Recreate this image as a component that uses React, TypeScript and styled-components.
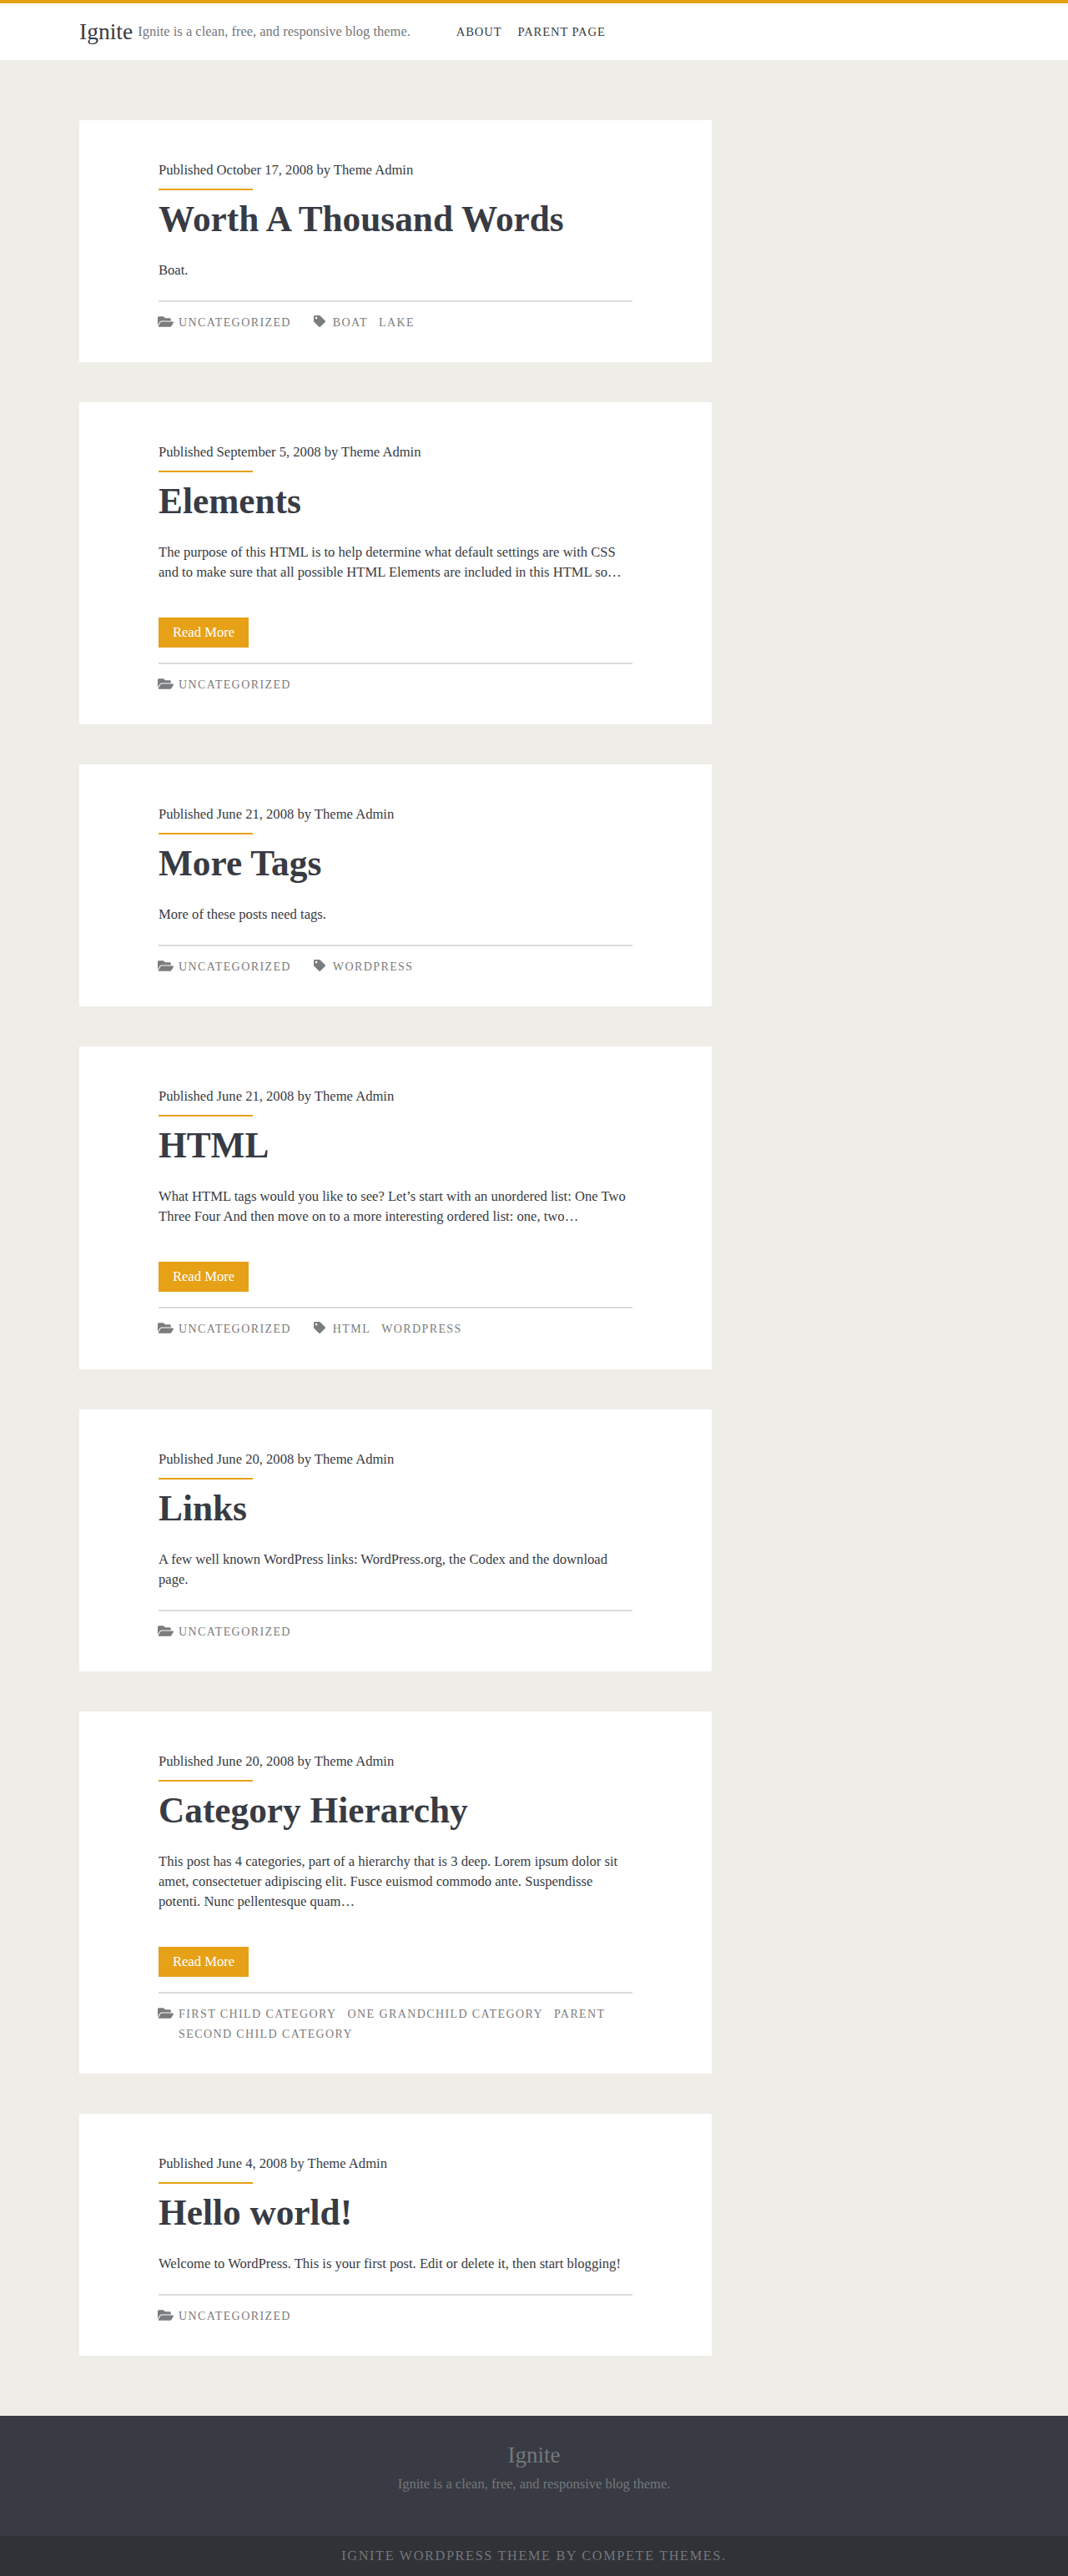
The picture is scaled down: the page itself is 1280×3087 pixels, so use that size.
import React from "react";
import styled, { createGlobalStyle } from "styled-components";
import { FaFolderOpen, FaTag } from "react-icons/fa";

const ORANGE = "#e6a117";
const DARK = "#383b43";

const posts = [
  {
    date: "October 17, 2008",
    title: "Worth A Thousand Words",
    excerpt: "Boat.",
    more: false,
    categories: ["Uncategorized"],
    tags: ["Boat", "Lake"],
  },
  {
    date: "September 5, 2008",
    title: "Elements",
    excerpt:
      "The purpose of this HTML is to help determine what default settings are with CSS and to make sure that all possible HTML Elements are included in this HTML so…",
    more: true,
    categories: ["Uncategorized"],
    tags: [],
  },
  {
    date: "June 21, 2008",
    title: "More Tags",
    excerpt: "More of these posts need tags.",
    more: false,
    categories: ["Uncategorized"],
    tags: ["WordPress"],
  },
  {
    date: "June 21, 2008",
    title: "HTML",
    excerpt:
      "What HTML tags would you like to see? Let’s start with an unordered list: One Two Three Four And then move on to a more interesting ordered list: one, two…",
    more: true,
    categories: ["Uncategorized"],
    tags: ["HTML", "WordPress"],
  },
  {
    date: "June 20, 2008",
    title: "Links",
    excerpt:
      "A few well known WordPress links: WordPress.org, the Codex and the download page.",
    more: false,
    categories: ["Uncategorized"],
    tags: [],
  },
  {
    date: "June 20, 2008",
    title: "Category Hierarchy",
    excerpt:
      "This post has 4 categories, part of a hierarchy that is 3 deep. Lorem ipsum dolor sit amet, consectetuer adipiscing elit. Fusce euismod commodo ante. Suspendisse potenti. Nunc pellentesque quam…",
    more: true,
    categories: [
      "First Child Category",
      "One Grandchild Category",
      "Parent",
      "Second Child Category",
    ],
    tags: [],
  },
  {
    date: "June 4, 2008",
    title: "Hello world!",
    excerpt:
      "Welcome to WordPress. This is your first post. Edit or delete it, then start blogging!",
    more: false,
    categories: ["Uncategorized"],
    tags: [],
  },
];

const GlobalStyle = createGlobalStyle`
  body {
    margin: 0;
    background: #eeede8;
    color: ${DARK};
    font-family: "Liberation Serif", serif;
    font-size: 16.6px;
    line-height: 24px;
  }
`;

const Header = styled.header`
  display: flex;
  align-items: center;
  height: 68px;
  padding-left: 95px;
  background: #fff;
  border-top: 4px solid ${ORANGE};
`;

const Brand = styled.div`
  font-size: 27.5px;
`;

const Tagline = styled.div`
  margin-left: 6px;
  font-size: 16.5px;
  color: #75777b;
`;

const Nav = styled.nav`
  display: flex;
  gap: 19px;
  margin-left: 55px;
  font-size: 14.6px;
  letter-spacing: 0.06em;
  text-transform: uppercase;
`;

const Main = styled.main`
  display: flex;
  flex-direction: column;
  gap: 48px;
  width: 758px;
  margin-left: 95px;
  padding: 72px 0;
`;

const Card = styled.article`
  padding: 48px 95px 35.15px;
  background: #fff;
`;

const Meta = styled.div`
  padding-bottom: 10px;
`;

const Accent = styled.div`
  width: 113px;
  height: 2px;
  background: ${ORANGE};
`;

const Title = styled.h2`
  margin: 10px 0 26px;
  font-size: 43.3px;
  line-height: 48px;
  font-weight: 700;
`;

const Excerpt = styled.p`
  margin: 0;
`;

const More = styled.a`
  display: block;
  width: 108px;
  height: 36px;
  margin-top: 42px;
  background: ${ORANGE};
  color: #fff;
  line-height: 36px;
  text-align: center;
`;

const Footer = styled.div<{ $more: boolean }>`
  display: flex;
  gap: 27px;
  margin-top: ${({ $more }) => ($more ? "18px" : "24px")};
  padding-top: 13px;
  border-top: 2px solid #d9dbde;
  color: #7b7c7e;
  font-size: 14px;
  letter-spacing: 0.1em;
  text-transform: uppercase;
`;

const Group = styled.div`
  display: flex;
  align-items: flex-start;
`;

const FolderIcon = styled(FaFolderOpen)`
  flex-shrink: 0;
  margin: 1px 6px 0 -1px;
`;

const TagIcon = styled(FaTag)`
  flex-shrink: 0;
  margin: 3px 9px 0 0;
`;

const Terms = styled.div`
  display: flex;
  flex-wrap: wrap;
  column-gap: 13px;
`;

const SiteFooter = styled.footer`
  height: 144px;
  padding-top: 29px;
  box-sizing: border-box;
  background: ${DARK};
  text-align: center;
  color: #75777b;
`;

const FooterBrand = styled.div`
  font-size: 27px;
  line-height: 36px;
`;

const FooterTagline = styled.div`
  margin-top: 5px;
  font-size: 16.5px;
`;

const Credit = styled.div`
  height: 48px;
  background: #303237;
  color: #75777b;
  font-size: 16.3px;
  line-height: 48px;
  letter-spacing: 0.1em;
  text-align: center;
  text-transform: uppercase;
`;

export default function App() {
  return (
    <>
      <GlobalStyle />
      <Header>
        <Brand>Ignite</Brand>
        <Tagline>Ignite is a clean, free, and responsive blog theme.</Tagline>
        <Nav>
          <span>About</span>
          <span>Parent Page</span>
        </Nav>
      </Header>
      <Main>
        {posts.map((post) => (
          <Card key={post.title}>
            <Meta>Published {post.date} by Theme Admin</Meta>
            <Accent />
            <Title>{post.title}</Title>
            <Excerpt>{post.excerpt}</Excerpt>
            {post.more && <More>Read More</More>}
            <Footer $more={post.more}>
              <Group>
                <FolderIcon size={19} />
                <Terms>
                  {post.categories.map((c) => (
                    <span key={c}>{c}</span>
                  ))}
                </Terms>
              </Group>
              {post.tags.length > 0 && (
                <Group>
                  <TagIcon size={14} />
                  <Terms>
                    {post.tags.map((t) => (
                      <span key={t}>{t}</span>
                    ))}
                  </Terms>
                </Group>
              )}
            </Footer>
          </Card>
        ))}
      </Main>
      <SiteFooter>
        <FooterBrand>Ignite</FooterBrand>
        <FooterTagline>
          Ignite is a clean, free, and responsive blog theme.
        </FooterTagline>
      </SiteFooter>
      <Credit>Ignite WordPress Theme by Compete Themes.</Credit>
    </>
  );
}
